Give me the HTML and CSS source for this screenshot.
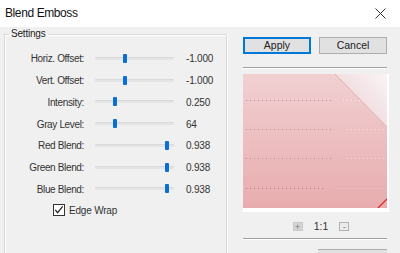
FILE: index.html
```html
<!DOCTYPE html>
<html>
<head>
<meta charset="utf-8">
<link rel="stylesheet" href="styles.css">
</head>
<body>
<div class="window">
  <div class="titlebar">
    <span class="title">Blend Emboss</span>
    <svg class="close" width="11" height="11" viewBox="0 0 11 11"><path d="M0.5 0.5 L10.5 10.5 M10.5 0.5 L0.5 10.5" stroke="#333" stroke-width="1" fill="none"/></svg>
  </div>
  <div class="content">
    <fieldset class="group">
      <legend class="legend">Settings</legend>
      <div class="rows">
        <div class="row"><span class="label">Horiz. Offset:</span><div class="slider"><div class="track"></div><div class="thumb" style="left:28px"></div></div><span class="value">-1.000</span></div>
        <div class="row"><span class="label">Vert. Offset:</span><div class="slider"><div class="track"></div><div class="thumb" style="left:28px"></div></div><span class="value">-1.000</span></div>
        <div class="row"><span class="label">Intensity:</span><div class="slider"><div class="track"></div><div class="thumb" style="left:18px"></div></div><span class="value">0.250</span></div>
        <div class="row"><span class="label">Gray Level:</span><div class="slider"><div class="track"></div><div class="thumb" style="left:18px"></div></div><span class="value">64</span></div>
        <div class="row"><span class="label">Red Blend:</span><div class="slider"><div class="track"></div><div class="thumb" style="left:70px"></div></div><span class="value">0.938</span></div>
        <div class="row"><span class="label">Green Blend:</span><div class="slider"><div class="track"></div><div class="thumb" style="left:70px"></div></div><span class="value">0.938</span></div>
        <div class="row"><span class="label">Blue Blend:</span><div class="slider"><div class="track"></div><div class="thumb" style="left:70px"></div></div><span class="value">0.938</span></div>
        <div class="checkrow">
          <span class="checkbox"><svg width="11" height="11" viewBox="0 0 11 11"><path d="M1.5 5.5 L4 8.5 L9.5 1.5" stroke="#222" stroke-width="1.3" fill="none"/></svg></span>
          <span class="checklabel">Edge Wrap</span>
        </div>
      </div>
    </fieldset>
    <div class="side">
      <div class="buttons">
        <button class="btn btn-default">Apply</button>
        <button class="btn">Cancel</button>
      </div>
      <div class="sep"></div>
      <div class="preview">
        <svg width="144" height="134" viewBox="0 0 144 134">
          <defs>
            <linearGradient id="bg" x1="0" y1="0" x2="0" y2="1">
              <stop offset="0" stop-color="#f1d0d2"/>
              <stop offset="1" stop-color="#e8acae"/>
            </linearGradient>
            <linearGradient id="corner" x1="0" y1="1" x2="1" y2="0">
              <stop offset="0" stop-color="#ecc9cd"/>
              <stop offset="0.5" stop-color="#f2dfe2"/>
              <stop offset="1" stop-color="#faf4f5"/>
            </linearGradient>
          </defs>
          <rect x="0" y="0" width="144" height="134" fill="url(#bg)"/>
          <polygon points="92,0 144,0 144,53" fill="url(#corner)"/>
          <line x1="92" y1="0" x2="144" y2="53" stroke="#d9a8ad" stroke-width="0.8"/>
          <g stroke-dasharray="1 3" stroke-width="1">
            <line x1="3" y1="26.5" x2="88" y2="26.5" stroke="#b88c90"/>
            <line x1="100" y1="26.5" x2="122" y2="26.5" stroke="#f6e6e8"/>
            <line x1="3" y1="55.5" x2="90" y2="55.5" stroke="#b88c90"/>
            <line x1="104" y1="55.5" x2="142" y2="55.5" stroke="#f2dadd"/>
            <line x1="3" y1="84.5" x2="88" y2="84.5" stroke="#b88c90"/>
            <line x1="104" y1="84.5" x2="142" y2="84.5" stroke="#f2d6d8"/>
            <line x1="3" y1="114.5" x2="80" y2="114.5" stroke="#a87c80"/>
            <line x1="94" y1="114.5" x2="142" y2="114.5" stroke="#f0d0d2"/>
          </g>
          <line x1="135" y1="134" x2="144" y2="125" stroke="#e02020" stroke-width="1.2"/>
        </svg>
      </div>
      <div class="zoombar">
        <span class="zbtn zplus">+</span>
        <span class="ztext">1:1</span>
        <span class="zbtn zminus">-</span>
      </div>
      <div class="sep sep2"></div>
      <div class="nextbtn"></div>
    </div>
  </div>
</div>
</body>
</html>
```
FILE: styles.css
```css
html, body {
  margin: 0;
  padding: 0;
  width: 400px;
  height: 253px;
  overflow: hidden;
  background: #f0f0f0;
}
.window {
  width: 400px;
  height: 253px;
  overflow: hidden;
  font-family: "Liberation Sans", Arial, sans-serif;
  font-size: 10px;
  color: #1e1e1e;
}
.titlebar {
  height: 27px;
  background: #ffffff;
  display: flex;
  align-items: center;
  justify-content: space-between;
  padding: 0 14px 0 5px;
  box-sizing: border-box;
}
.title {
  font-family: "Liberation Sans", Arial, sans-serif;
  font-size: 12px;
  letter-spacing: -0.4px;
  color: #111;
  margin-top: -1px;
}
.close {
  display: block;
}
.content {
  display: flex;
  align-items: flex-start;
}
.group {
  margin: 1px 0 0 4px;
  padding: 0;
  width: 223px;
  height: 228px;
  border: 1px solid #d8d8d8;
  border-bottom: 0;
  box-shadow: inset 1px 1px 0 #ffffff, 1px 0 0 #ffffff;
  box-sizing: border-box;
}
.legend {
  margin-left: 4px;
  padding: 0 2px;
  font-size: 10px;
  letter-spacing: -0.2px;
  color: #222;
  line-height: 12px;
}
.rows {
  display: flex;
  flex-direction: column;
  padding-top: 8px;
}
.row {
  display: flex;
  align-items: center;
  height: 21.75px;
}
.label {
  width: 79px;
  text-align: right;
  color: #333;
  letter-spacing: -0.35px;
}
.slider {
  position: relative;
  margin-left: 11px;
  width: 79px;
  height: 10px;
}
.track {
  position: absolute;
  left: 0;
  right: 0;
  top: 3px;
  height: 3px;
  background: #e4e4e4;
  border-radius: 1px;
  border-top: 1px solid #dadada;
  box-sizing: border-box;
}
.thumb {
  position: absolute;
  top: 0;
  width: 4px;
  height: 9px;
  background: #0a6ed8;
  border-radius: 1px;
}
.value {
  margin-left: 12px;
  color: #333;
  letter-spacing: -0.2px;
}
.checkrow {
  display: flex;
  align-items: center;
  height: 20px;
  margin-left: 48px;
}
.checkbox {
  width: 12px;
  height: 12px;
  border: 1px solid #333;
  box-sizing: border-box;
  background: #fff;
  display: flex;
  align-items: center;
  justify-content: center;
}
.checkbox svg {
  display: block;
  width: 10px;
  height: 10px;
}
.checklabel {
  margin-left: 4px;
  color: #333;
  letter-spacing: -0.2px;
}
.side {
  margin-left: 16px;
  width: 147px;
  display: flex;
  flex-direction: column;
}
.buttons {
  display: flex;
  justify-content: space-between;
  width: 144px;
  margin-top: 10px;
}
.btn {
  width: 68px;
  height: 17px;
  padding: 0;
  font-family: "Liberation Sans", Arial, sans-serif;
  font-size: 10.5px;
  color: #222;
  background: #e1e1e1;
  border: 1px solid #adadad;
  box-sizing: border-box;
  line-height: 15px;
}
.btn-default {
  border: 1px solid #0078d7;
  box-shadow: inset 0 0 0 1px #0078d7;
}
.sep {
  margin-top: 13px;
  width: 144px;
  height: 1px;
  background: #a0a0a0;
  box-shadow: 0 1px 0 #ffffff;
}
.preview {
  margin-top: 6px;
  height: 138px;
  background: #ffffff;
  width: 146px;
}
.preview svg {
  display: block;
}
.zoombar {
  display: flex;
  align-items: center;
  justify-content: center;
  gap: 11px;
  margin-top: 9px;
  margin-left: 6px;
  width: 144px;
  height: 10px;
}
.zbtn {
  width: 10px;
  height: 9px;
  box-sizing: border-box;
  font-size: 9px;
  line-height: 8px;
  text-align: center;
  color: #777;
}
.zplus {
  background: #d4d4d4;
  border: 1px solid #c8c8c8;
}
.zminus {
  background: #ececec;
  border: 1px solid #b0b0b0;
}
.ztext {
  font-size: 10.5px;
  color: #333;
}
.sep2 {
  margin-top: 7px;
}
.nextbtn {
  margin-top: 10px;
  margin-left: 75px;
  width: 69px;
  height: 3px;
  border-top: 1px solid #adadad;
  background: #e1e1e1;
}
```
